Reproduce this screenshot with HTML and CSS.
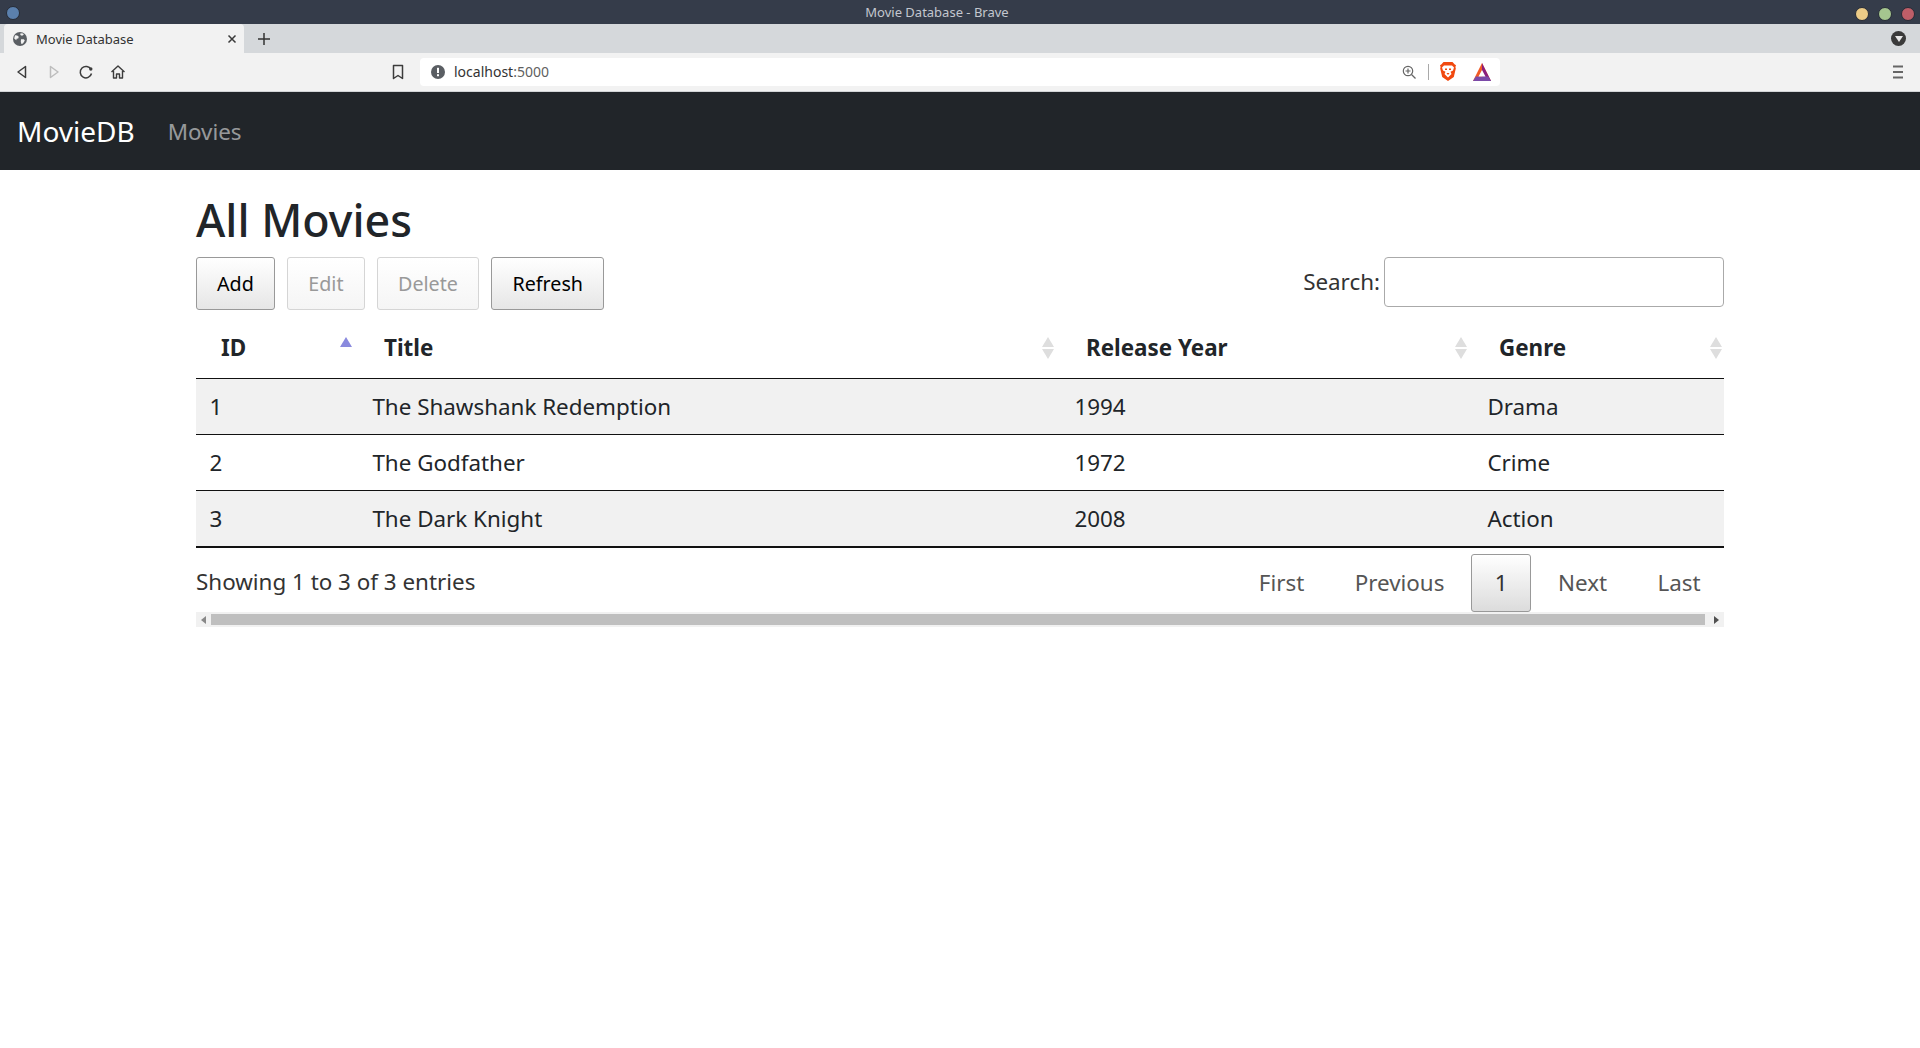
FILE: index.html
```html
<!DOCTYPE html>
<html lang="en">
<head>
<meta charset="utf-8">
<title>Movie Database</title>
<link rel="stylesheet" href="styles.css">
</head>
<body>
<header class="titlebar">
  <span class="win-dot win-blue"></span>
  <span class="win-title">Movie Database - Brave</span>
  <div class="win-controls">
    <span class="win-dot win-yellow"></span>
    <span class="win-dot win-green"></span>
    <span class="win-dot win-red"></span>
  </div>
</header>
<div class="tabstrip">
  <div class="tab">
    <svg class="favicon" viewBox="0 0 14 14"><circle cx="7" cy="7" r="7" fill="#5b5f64"/><path d="M2 3.2l2.2.2 1.6 1.4-.6 1.6-1.6.3-.3 1.6L1.200 6.500zM7.500 1.200l2.500.4.800 1.200-1.800 1-1.700-.9zM8 7.200l2.800.1 1 1.200-1.800 3-1.600.6-.6-2.300z" fill="#f2f2f2"/></svg>
    <span class="tab-title">Movie Database</span>
    <svg class="tab-close" viewBox="0 0 10 10"><path d="M1.500 1.500l7 7M8.500 1.500l-7 7" stroke="#3a3a3a" stroke-width="1.500"/></svg>
  </div>
  <svg class="new-tab" viewBox="0 0 12 12"><path d="M6 0v12M0 6h12" stroke="#333" stroke-width="1.500"/></svg>
  <div class="tab-spacer"></div>
  <span class="tab-menu"><svg viewBox="0 0 8 6"><path d="M0 0h8L4 6z" fill="#e8e8e8"/></svg></span>
</div>
<nav class="toolbar">
  <svg class="tool tool-back" viewBox="0 0 16 16"><path d="M11.500 2.500v11L4 8z" fill="none" stroke="#3c3c3c" stroke-width="1.500" stroke-linejoin="round"/></svg>
  <svg class="tool tool-forward" viewBox="0 0 16 16"><path d="M4.500 2.500v11L12 8z" fill="none" stroke="#bdbdbd" stroke-width="1.500" stroke-linejoin="round"/></svg>
  <svg class="tool tool-reload" viewBox="0 0 16 16"><path d="M13 5.500A5.700 5.700 0 1 0 13.500 9.500" fill="none" stroke="#3c3c3c" stroke-width="1.500"/><circle cx="12.800" cy="5" r="1.700" fill="#3c3c3c"/></svg>
  <svg class="tool tool-home" viewBox="0 0 16 16"><path d="M1.500 8L8 2l6.500 6M3.500 7v7h3v-4h3v4h3V7" fill="none" stroke="#3c3c3c" stroke-width="1.400" stroke-linejoin="round"/></svg>
  <svg class="tool tool-bookmark" viewBox="0 0 16 16"><path d="M3.500 1.500h9v13L8 11.500l-4.500 3z" fill="none" stroke="#3c3c3c" stroke-width="1.500" stroke-linejoin="round"/></svg>
  <div class="urlbar">
    <svg class="url-info" viewBox="0 0 14 14"><circle cx="7" cy="7" r="7" fill="#5a5e63"/><rect x="6" y="2.800" width="2" height="5.200" fill="#fff"/><rect x="6" y="9.200" width="2" height="2" fill="#fff"/></svg>
    <span class="url-text">localhost<span class="url-port">:5000</span></span>
    <span class="url-spacer"></span>
    <svg class="url-zoom" viewBox="0 0 14 14"><circle cx="6" cy="6" r="4.700" fill="none" stroke="#666" stroke-width="1.200"/><path d="M9.500 9.500l4 4" stroke="#666" stroke-width="1.200"/><path d="M6 3.500v5M3.500 6h5" stroke="#666" stroke-width="1.200"/></svg>
    <span class="url-sep"></span>
    <svg class="url-brave" viewBox="0 0 16 19"><path d="M3.500 0h9L14.500 2.200 16 3.200 15.400 5l.4 1.500-2 8.500L8 19 2.200 15 .2 6.500.6 5 0 3.200 1.500 2.200z" fill="#f1490f"/><path d="M4 3.500h8l2 2-1 3-2.500 1.200L11.500 12 8 15.500 4.500 12l1-2.300L3 8.500l-1-3z" fill="#fff"/><path d="M5 6.500h2v1.500H5zM9 6.500h2v1.500H9zM6.500 11h3L8 13z" fill="#f1490f"/></svg>
    <svg class="url-bat" viewBox="0 0 18 18"><path d="M9 0l9 18H0z" fill="#f15a24"/><path d="M9 0l9 18H9z" fill="#8a1f7d"/><path d="M0 18l2.800-4.500h12.400L18 18z" fill="#7b4aa8"/><path d="M9 7l3.500 6.500h-7z" fill="#fff"/></svg>
  </div>
  <div class="tab-spacer"></div>
  <svg class="tool tool-menu" viewBox="0 0 14 16"><path d="M2 2.500h10M2 8h10M2 13.500h10" stroke="#666" stroke-width="2"/></svg>
</nav>
<div class="navbar">
  <a class="brand">MovieDB</a>
  <a class="nav-link">Movies</a>
</div>
<main class="container">
  <h1 class="page-title">All Movies</h1>
  <div class="controls">
    <div class="buttons">
      <button class="dt-btn">Add</button>
      <button class="dt-btn disabled">Edit</button>
      <button class="dt-btn disabled">Delete</button>
      <button class="dt-btn">Refresh</button>
    </div>
    <label class="search">Search:<span class="search-input"></span></label>
  </div>
  <table class="movies">
    <colgroup>
      <col class="col-id"><col class="col-title"><col class="col-year"><col class="col-genre">
    </colgroup>
    <thead>
      <tr>
        <th>ID<span class="sort"><i class="up active"></i></span></th>
        <th>Title<span class="sort"><i class="up"></i><i class="down"></i></span></th>
        <th>Release Year<span class="sort"><i class="up"></i><i class="down"></i></span></th>
        <th>Genre<span class="sort sort-last"><i class="up"></i><i class="down"></i></span></th>
      </tr>
    </thead>
    <tbody>
      <tr class="odd"><td>1</td><td>The Shawshank Redemption</td><td>1994</td><td>Drama</td></tr>
      <tr><td>2</td><td>The Godfather</td><td>1972</td><td>Crime</td></tr>
      <tr class="odd last"><td>3</td><td>The Dark Knight</td><td>2008</td><td>Action</td></tr>
    </tbody>
  </table>
  <div class="table-footer">
    <div class="info">Showing 1 to 3 of 3 entries</div>
    <div class="pagination">
      <a class="page">First</a>
      <a class="page">Previous</a>
      <a class="page current">1</a>
      <a class="page">Next</a>
      <a class="page">Last</a>
    </div>
  </div>
  <div class="hscroll">
    <span class="arrow arrow-left"></span>
    <span class="thumb"></span>
    <span class="arrow arrow-right"></span>
  </div>
</main>
</body>
</html>
```
FILE: styles.css
```css
* { box-sizing: border-box; }
html, body { margin: 0; padding: 0; height: 1048px; overflow: hidden; background: #fff; }
body { font-family: "Noto Sans", "Open Sans", sans-serif; font-size: 22.4px; line-height: 30px; color: #212529; }

.titlebar { height: 24px; background: #353c4a; display: flex; align-items: center; justify-content: center; position: relative; padding-right: 46px; }
.win-title { font-size: 13px; line-height: 24px; color: #c3c7cf; }
.win-dot { display: block; width: 14px; height: 14px; border-radius: 50%; border: 1px solid #262b36; }
.win-blue { position: absolute; left: 6px; top: 6px; background: #5b80ad; }
.win-controls { position: absolute; right: 5px; top: 7px; display: flex; gap: 9px; }
.win-yellow { background: #eccb87; }
.win-green { background: #a5c68f; }
.win-red { background: #bf5e68; }

.tabstrip { height: 29px; background: #d5d8db; display: flex; align-items: stretch; padding-left: 4px; }
.tab { width: 240px; background: #f2f2f2; border-radius: 4px 4px 0 0; display: flex; align-items: center; padding-left: 9px; }
.favicon { width: 14px; height: 14px; }
.tab-title { font-size: 13px; line-height: 20px; color: #333; margin-left: 9px; flex: 1; }
.tab-close { width: 10px; height: 10px; margin-right: 7px; }
.new-tab { width: 12px; height: 12px; margin: 9px 0 0 14px; }
.tab-spacer { flex: 1; }
.tab-menu { width: 15px; height: 15px; border-radius: 50%; background: #3a3a3a; margin: 7px 14px 0 0; display: flex; align-items: center; justify-content: center; }
.tab-menu svg { width: 8px; height: 6px; }

.toolbar { height: 39px; background: #f2f2f2; border-bottom: 1px solid #d2d4d6; display: flex; align-items: center; padding-bottom: 1px; }
.tool { width: 16px; height: 16px; flex: none; }
.tool-back { margin-left: 14px; }
.tool-forward { margin-left: 16px; }
.tool-reload { margin-left: 16px; }
.tool-home { margin-left: 16px; }
.tool-bookmark { margin-left: 264px; }
.tool-menu { width: 14px; margin-right: 15px; }
.urlbar { width: 1080px; height: 28px; margin-left: 14px; background: #fff; border-radius: 4px; display: flex; align-items: center; padding-left: 11px; }
.url-info { width: 14px; height: 14px; }
.url-text { font-size: 14px; line-height: 20px; color: #333; margin-left: 9px; }
.url-port { color: #5f5f5f; }
.url-spacer { flex: 1; }
.url-zoom { width: 14px; height: 14px; margin-right: 12px; }
.url-sep { width: 1px; height: 16px; background: #a9a9a9; margin-right: 11px; }
.url-brave { width: 16px; height: 19px; margin-right: 17px; }
.url-bat { width: 18px; height: 18px; margin-right: 9px; }

.navbar { height: 78px; background: #212529; display: flex; align-items: center; padding-left: 17px; }
.brand { font-size: 28px; line-height: 42px; color: #fff; margin-right: 33px; }
.nav-link { font-size: 22.4px; line-height: 34px; padding-top: 2px; color: rgba(255,255,255,.55); }

.container { margin: 0 196px; padding-top: 20px; }
.page-title { margin: 0 0 7px; font-size: 44.8px; line-height: 60px; font-weight: 500; color: #212529; }

.controls { display: flex; justify-content: space-between; align-items: flex-start; height: 52px; margin-bottom: 9px; }
.buttons { display: flex; gap: 12.5px; }
.dt-btn { font: inherit; font-size: 19.7px; height: 53px; padding: 0 20px; color: #000; border: 1px solid #999; border-radius: 3px; background: linear-gradient(to bottom, #fff 0%, #e6e6e6 100%); }
.dt-btn.disabled { color: #999; border-color: #d5d5d5; background: linear-gradient(to bottom, #fff 0%, #f5f5f5 100%); }
.search { display: flex; align-items: center; color: #333; height: 50px; }
.search-input { display: block; width: 340px; height: 50px; margin-left: 4px; border: 1px solid #aaa; border-radius: 4px; background: #fff; }

.movies { width: 100%; border-collapse: separate; border-spacing: 0; table-layout: fixed; }
.col-id { width: 163px; }
.col-title { width: 702px; }
.col-year { width: 413px; }
.col-genre { width: 250px; }
th { position: relative; text-align: left; font-weight: 700; height: 61px; padding: 0 25px; border-bottom: 1px solid #111; }
td { height: 56px; padding: 0 13.4px; border-bottom: 1px solid #111; }
tr.odd td { background: #f1f1f1; }
tr.last td { height: 57px; border-bottom-width: 2px; }
.sort { position: absolute; right: 7.5px; top: 19px; display: flex; flex-direction: column; gap: 2px; width: 12px; }
.sort.sort-last { right: 2px; }
.sort i { display: block; width: 0; height: 0; border-left: 6px solid transparent; border-right: 6px solid transparent; }
.sort .up { border-bottom: 10px solid #dedede; }
.sort .down { border-top: 10px solid #dedede; }
.sort .up.active { border-bottom-color: #8a8ade; }

.table-footer { display: flex; justify-content: space-between; align-items: flex-start; height: 64px; }
.info { color: #333; padding-top: 19px; }
.pagination { display: flex; margin-top: 6px; }
.page { display: block; height: 58px; line-height: 44px; padding: 6px 22.4px; margin-left: 3.6px; border: 1px solid transparent; border-radius: 3px; color: #555; }
.page.current { color: #333; border-color: #999; background: linear-gradient(to bottom, #fff 0%, #dcdcdc 100%); }

.hscroll { height: 15px; background: #f1f1f1; display: flex; align-items: center; }
.thumb { display: block; flex: 1; height: 11px; background: #bfbfbf; }
.arrow { display: block; width: 0; height: 0; border-top: 4px solid transparent; border-bottom: 4px solid transparent; }
.arrow-left { border-right: 5px solid #888; margin: 0 5px; }
.arrow-right { border-left: 5px solid #505050; margin: 0 5px 0 9px; }
```
